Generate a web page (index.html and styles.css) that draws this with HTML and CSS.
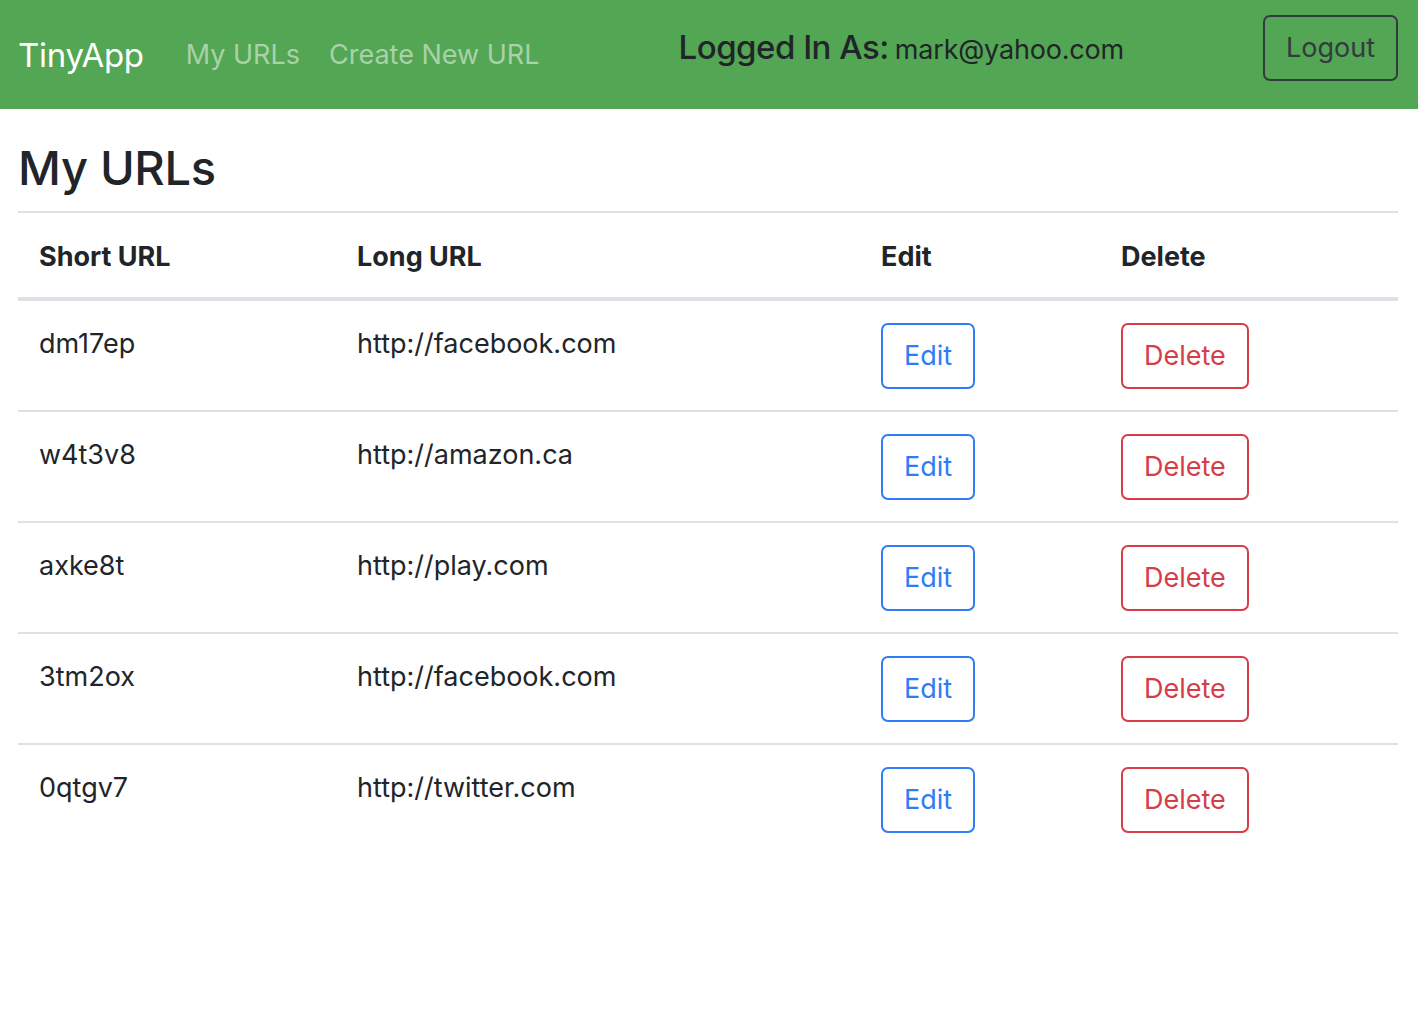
FILE: index.html
```html
<!DOCTYPE html>
<html lang="en">
<head>
<meta charset="utf-8">
<title>TinyApp</title>
<link rel="stylesheet" href="styles.css">
</head>
<body>
<nav class="navbar">
  <div class="nav-left">
    <a class="brand" href="#">TinyApp</a>
    <a class="nav-link" href="#">My URLs</a>
    <a class="nav-link" href="#">Create New URL</a>
  </div>
  <div class="nav-user">
    <span class="user-label">Logged In As:</span>
    <span class="user-email">mark@yahoo.com</span>
  </div>
  <div class="nav-right">
    <button class="btn btn-logout" type="button">Logout</button>
  </div>
</nav>
<main class="content">
  <h1 class="title">My URLs</h1>
  <table class="url-table">
    <thead>
      <tr>
        <th class="col-short">Short URL</th>
        <th class="col-long">Long URL</th>
        <th class="col-edit">Edit</th>
        <th class="col-delete">Delete</th>
      </tr>
    </thead>
    <tbody>
      <tr>
        <td>dm17ep</td>
        <td>http://facebook.com</td>
        <td><a class="btn btn-edit" href="#">Edit</a></td>
        <td><button class="btn btn-delete" type="button">Delete</button></td>
      </tr>
      <tr>
        <td>w4t3v8</td>
        <td>http://amazon.ca</td>
        <td><a class="btn btn-edit" href="#">Edit</a></td>
        <td><button class="btn btn-delete" type="button">Delete</button></td>
      </tr>
      <tr>
        <td>axke8t</td>
        <td>http://play.com</td>
        <td><a class="btn btn-edit" href="#">Edit</a></td>
        <td><button class="btn btn-delete" type="button">Delete</button></td>
      </tr>
      <tr>
        <td>3tm2ox</td>
        <td>http://facebook.com</td>
        <td><a class="btn btn-edit" href="#">Edit</a></td>
        <td><button class="btn btn-delete" type="button">Delete</button></td>
      </tr>
      <tr>
        <td>0qtgv7</td>
        <td>http://twitter.com</td>
        <td><a class="btn btn-edit" href="#">Edit</a></td>
        <td><button class="btn btn-delete" type="button">Delete</button></td>
      </tr>
    </tbody>
  </table>
</main>
</body>
</html>
```

FILE: styles.css
```css
* { box-sizing: border-box; }

body {
  margin: 0;
  font-family: "Inter", "Liberation Sans", sans-serif;
  font-size: 27px;
  line-height: 42px;
  color: #212529;
  background: #ffffff;
}

.navbar {
  display: flex;
  justify-content: space-between;
  align-items: center;
  height: 109px;
  padding: 0 20px 0 18px;
  background: #53a653;
}

.nav-left {
  display: flex;
  align-items: center;
  gap: 29px;
}

.nav-left a { text-decoration: none; }

.brand {
  color: #ffffff;
  font-size: 33px;
  margin-right: 13px;
  letter-spacing: -0.3px;
}

.nav-link {
  color: #a9d2a9;
  font-size: 27px;
}

.nav-user {
  display: flex;
  align-items: baseline;
  gap: 6px;
  margin-bottom: 13px;
  color: #212529;
}

.user-label {
  font-size: 33px;
  font-weight: 500;
  letter-spacing: -0.5px;
}

.user-email {
  font-size: 27px;
  letter-spacing: -0.2px;
}

.nav-right { margin-bottom: 13px; }

.btn {
  display: inline-block;
  font-family: inherit;
  font-size: 27px;
  line-height: 42px;
  padding: 10px 21px;
  border: 2px solid;
  border-radius: 7px;
  background: transparent;
  text-decoration: none;
  cursor: pointer;
}

.btn-logout {
  color: #343a40;
  border-color: #343a40;
}

.btn-edit {
  color: #2f7df6;
  border-color: #2f7df6;
}

.btn-delete {
  color: #d63d48;
  border-color: #d63d48;
}

.content {
  padding: 0 20px 0 18px;
}

.title {
  margin: 31px 0 15px;
  font-size: 47px;
  line-height: 56px;
  font-weight: 500;
  letter-spacing: -0.3px;
}

.url-table {
  width: 100%;
  border-collapse: collapse;
}

.url-table th,
.url-table td {
  text-align: left;
  vertical-align: top;
  padding: 21px;
  border-top: 2px solid #dee2e6;
}

.url-table th {
  font-weight: 700;
  padding-top: 23px;
  padding-bottom: 19px;
  border-bottom: 4px solid #dee2e6;
}

.url-table td { padding-top: 22px; padding-bottom: 21px; }

.col-short { width: 318px; }
.col-long { width: 524px; }
.col-edit { width: 240px; }
```
